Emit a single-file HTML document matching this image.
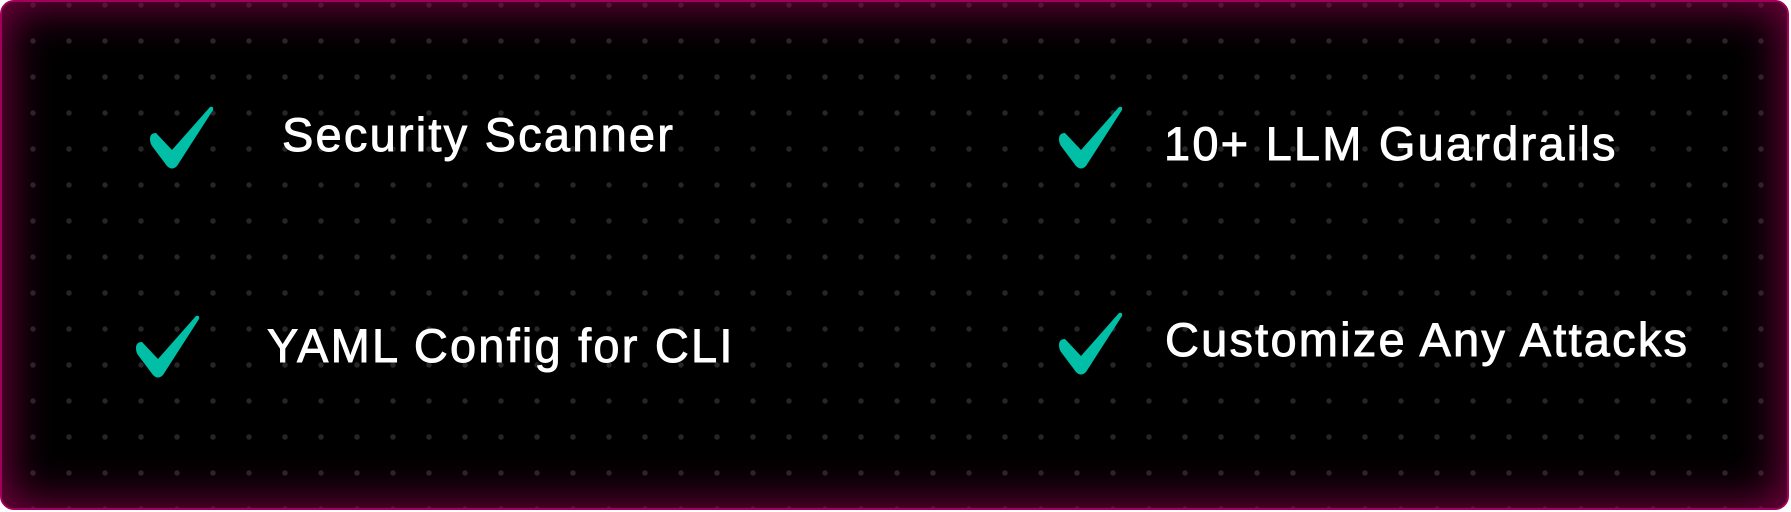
<!DOCTYPE html>
<html><head><style>
html,body{margin:0;padding:0;background:#fff;width:1791px;height:512px;overflow:hidden}
.box{position:absolute;left:0;top:0;width:1785px;height:506px;border:2px solid #a3005c;border-radius:14px;background:#000;overflow:hidden}
.dots{position:absolute;left:0;top:0;width:100%;height:100%;
background-image:radial-gradient(circle,#262626 2.4px,transparent 3px);background-size:36px 36px;background-position:13px 21px}
.glow{position:absolute;inset:0;box-shadow:inset 0 0 45px 4px rgba(150,0,80,0.8);border-radius:12px}
.t{position:absolute;color:#fff;font-family:"Liberation Sans",sans-serif;font-size:47px;line-height:1;white-space:nowrap;-webkit-text-stroke:0.9px #fff;letter-spacing:2.2px}
svg{position:absolute}
</style></head><body>
<div class="box"><div class="dots"></div><div class="glow"></div>
<svg style="left:148px;top:104px" width="64" height="64" viewBox="0 0 64 64"><path d="M0,33 Q0,27 6,27 L22,44 L60,1 Q64,0 63,4 L27,60 Q22,65 17,60 L2,40 Q0,37 0,33Z" fill="#00bfa6"/></svg>
<svg style="left:1057px;top:104px" width="64" height="64" viewBox="0 0 64 64"><path d="M0,33 Q0,27 6,27 L22,44 L60,1 Q64,0 63,4 L27,60 Q22,65 17,60 L2,40 Q0,37 0,33Z" fill="#00bfa6"/></svg>
<svg style="left:134px;top:313px" width="64" height="64" viewBox="0 0 64 64"><path d="M0,33 Q0,27 6,27 L22,44 L60,1 Q64,0 63,4 L27,60 Q22,65 17,60 L2,40 Q0,37 0,33Z" fill="#00bfa6"/></svg>
<svg style="left:1057px;top:310px" width="64" height="64" viewBox="0 0 64 64"><path d="M0,33 Q0,27 6,27 L22,44 L60,1 Q64,0 63,4 L27,60 Q22,65 17,60 L2,40 Q0,37 0,33Z" fill="#00bfa6"/></svg>
<div class="t" style="left:280px;top:109px">Security Scanner</div>
<div class="t" style="left:1162px;top:118px">10+ LLM Guardrails</div>
<div class="t" style="left:265px;top:320px">YAML Config for CLI</div>
<div class="t" style="left:1163px;top:314px">Customize Any Attacks</div>
</div>
</body></html>
